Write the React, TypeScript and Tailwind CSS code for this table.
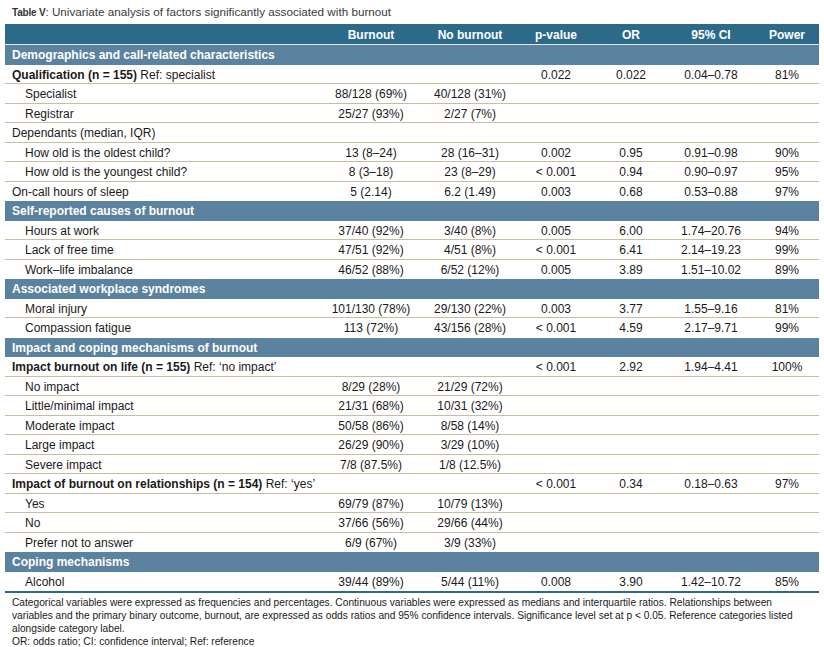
import React from "react";

type Row =
  | { kind: "section"; label: string }
  | {
      kind: "row";
      indent?: boolean;
      bold?: string;
      label?: string;
      v?: [string, string, string, string, string, string];
    };

const E = "";
const rows: Row[] = [
  { kind: "section", label: "Demographics and call-related characteristics" },
  { kind: "row", bold: "Qualification (n = 155)", label: " Ref: specialist", v: [E, E, "0.022", "0.022", "0.04–0.78", "81%"] },
  { kind: "row", indent: true, label: "Specialist", v: ["88/128 (69%)", "40/128 (31%)", E, E, E, E] },
  { kind: "row", indent: true, label: "Registrar", v: ["25/27 (93%)", "2/27 (7%)", E, E, E, E] },
  { kind: "row", label: "Dependants (median, IQR)" },
  { kind: "row", indent: true, label: "How old is the oldest child?", v: ["13 (8–24)", "28 (16–31)", "0.002", "0.95", "0.91–0.98", "90%"] },
  { kind: "row", indent: true, label: "How old is the youngest child?", v: ["8 (3–18)", "23 (8–29)", "< 0.001", "0.94", "0.90–0.97", "95%"] },
  { kind: "row", label: "On-call hours of sleep", v: ["5 (2.14)", "6.2 (1.49)", "0.003", "0.68", "0.53–0.88", "97%"] },
  { kind: "section", label: "Self-reported causes of burnout" },
  { kind: "row", indent: true, label: "Hours at work", v: ["37/40 (92%)", "3/40 (8%)", "0.005", "6.00", "1.74–20.76", "94%"] },
  { kind: "row", indent: true, label: "Lack of free time", v: ["47/51 (92%)", "4/51 (8%)", "< 0.001", "6.41", "2.14–19.23", "99%"] },
  { kind: "row", indent: true, label: "Work–life imbalance", v: ["46/52 (88%)", "6/52 (12%)", "0.005", "3.89", "1.51–10.02", "89%"] },
  { kind: "section", label: "Associated workplace syndromes" },
  { kind: "row", indent: true, label: "Moral injury", v: ["101/130 (78%)", "29/130 (22%)", "0.003", "3.77", "1.55–9.16", "81%"] },
  { kind: "row", indent: true, label: "Compassion fatigue", v: ["113 (72%)", "43/156 (28%)", "< 0.001", "4.59", "2.17–9.71", "99%"] },
  { kind: "section", label: "Impact and coping mechanisms of burnout" },
  { kind: "row", bold: "Impact burnout on life (n = 155)", label: " Ref: ‘no impact’", v: [E, E, "< 0.001", "2.92", "1.94–4.41", "100%"] },
  { kind: "row", indent: true, label: "No impact", v: ["8/29 (28%)", "21/29 (72%)", E, E, E, E] },
  { kind: "row", indent: true, label: "Little/minimal impact", v: ["21/31 (68%)", "10/31 (32%)", E, E, E, E] },
  { kind: "row", indent: true, label: "Moderate impact", v: ["50/58 (86%)", "8/58 (14%)", E, E, E, E] },
  { kind: "row", indent: true, label: "Large impact", v: ["26/29 (90%)", "3/29 (10%)", E, E, E, E] },
  { kind: "row", indent: true, label: "Severe impact", v: ["7/8 (87.5%)", "1/8 (12.5%)", E, E, E, E] },
  { kind: "row", bold: "Impact of burnout on relationships (n = 154)", label: " Ref: ‘yes’", v: [E, E, "< 0.001", "0.34", "0.18–0.63", "97%"] },
  { kind: "row", indent: true, label: "Yes", v: ["69/79 (87%)", "10/79 (13%)", E, E, E, E] },
  { kind: "row", indent: true, label: "No", v: ["37/66 (56%)", "29/66 (44%)", E, E, E, E] },
  { kind: "row", indent: true, label: "Prefer not to answer", v: ["6/9 (67%)", "3/9 (33%)", E, E, E, E] },
  { kind: "section", label: "Coping mechanisms" },
  { kind: "row", indent: true, label: "Alcohol", v: ["39/44 (89%)", "5/44 (11%)", "0.008", "3.90", "1.42–10.72", "85%"] },
];

const grid = "grid grid-cols-[314px_104px_94px_78px_72px_88px_64px]";

export default function App() {
  return (
    <div
      className="w-[824px] h-[647px] bg-white overflow-hidden text-[#1a1a1a]"
      style={{ fontFamily: '"Liberation Sans", Arial, sans-serif' }}
    >
      <div className="h-[24px] pl-[12px] pt-[5px] text-[11.7px] leading-[14px] text-[#3a3a3a] whitespace-nowrap">
        <span className="font-bold text-[10px] tracking-[-0.2px] text-[#333]">Table V</span>
        : Univariate analysis of factors significantly associated with burnout
      </div>
      <div className="mx-[5px] w-[814px] border-b-2 border-[#2d6a8a]">
        <div className={`${grid} h-[21px] pt-[2px] bg-[#2d6a8a] border-b border-[#dfe8ee] text-white font-bold text-[12px] items-center`}>
          <div />
          <div className="text-center">Burnout</div>
          <div className="text-center">No burnout</div>
          <div className="text-center">p-value</div>
          <div className="text-center">OR</div>
          <div className="text-center">95% CI</div>
          <div className="text-center">Power</div>
        </div>
        {rows.map((r, i) => {
          const last = i === rows.length - 1;
          if (r.kind === "section") {
            return (
              <div
                key={i}
                className="h-[19.5px] pt-[1px] bg-[#5b829e] text-white font-bold text-[12px] flex items-center pl-[7px] whitespace-nowrap"
              >
                {r.label}
              </div>
            );
          }
          const next = rows[i + 1];
          const noBorder = last || (next && next.kind === "section");
          return (
            <div
              key={i}
              className={`${grid} h-[19.5px] pt-[1px] items-center text-[12px] ${noBorder ? "" : "border-b border-[#c8bd9f]"}`}
            >
              <div className={`${r.indent ? "pl-[20px]" : "pl-[7px]"} whitespace-nowrap`}>
                {r.bold && <span className="font-bold">{r.bold}</span>}
                {r.label}
              </div>
              {(r.v ?? [E, E, E, E, E, E]).map((c, j) => (
                <div key={j} className="text-center whitespace-nowrap">
                  {c}
                </div>
              ))}
            </div>
          );
        })}
      </div>
      <div className="pl-[12px] pt-[3px] text-[10.2px] leading-[13px] text-[#1a1a1a] whitespace-nowrap">
        Categorical variables were expressed as frequencies and percentages. Continuous variables were expressed as medians and interquartile ratios. Relationships between
        <br />
        variables and the primary binary outcome, burnout, are expressed as odds ratios and 95% confidence intervals. Significance level set at p &lt; 0.05. Reference categories listed
        <br />
        alongside category label.
        <br />
        OR: odds ratio; CI: confidence interval; Ref: reference
      </div>
    </div>
  );
}
